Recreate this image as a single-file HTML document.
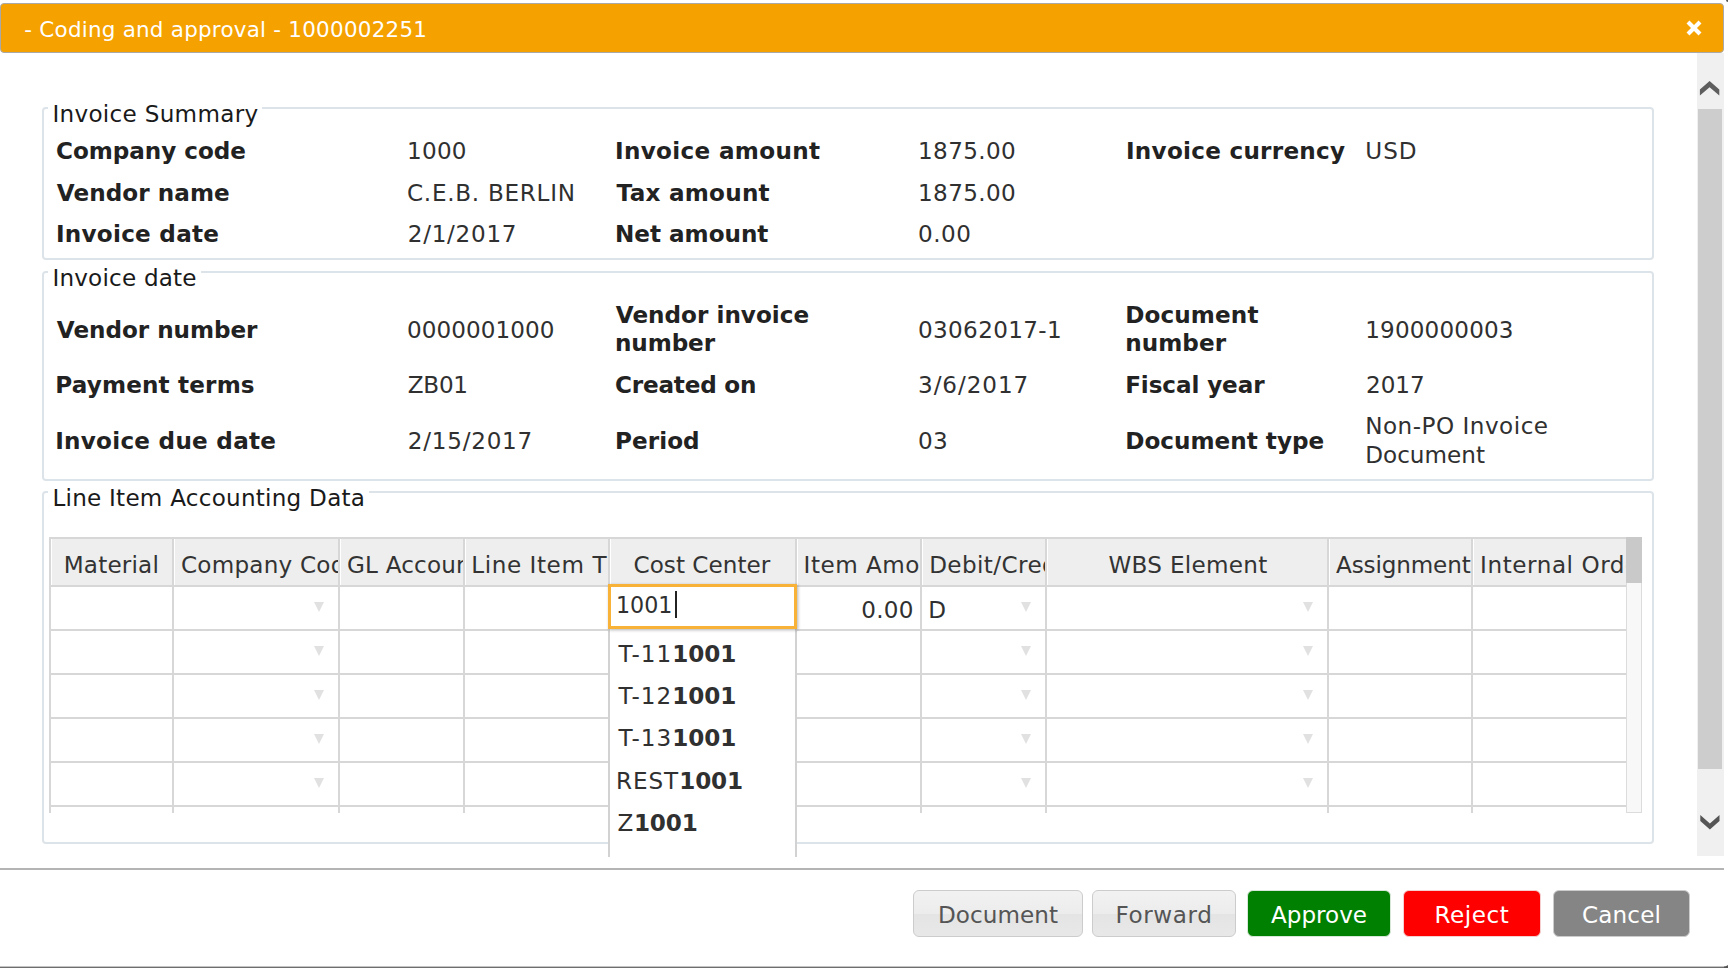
<!DOCTYPE html>
<html lang="en">
<head>
<meta charset="utf-8">
<title>Coding and approval - 1000002251</title>
<style>
html,body{margin:0;padding:0;}
body{width:1728px;height:968px;overflow:hidden;position:relative;background:#fff;
 font-family:"DejaVu Sans","Liberation Sans",sans-serif;font-size:23.1px;color:#303030;}
.a{position:absolute;}
.t{position:absolute;white-space:nowrap;line-height:28px;height:28px;}
.b{font-weight:bold;letter-spacing:-0.1px;color:#222;}
.n{letter-spacing:0.25px;}
#titlebar{left:0px;top:3px;width:1722px;height:48px;background:#f5a100;border:1px solid #a9a9a9;border-radius:4px;}
#titletext{left:24.3px;top:16px;color:#fff;font-size:21.45px;letter-spacing:0.24px;}
.fs{position:absolute;left:42px;width:1608px;border:2px solid #dce4e9;border-radius:4px;}
.lg{position:absolute;background:#fff;left:48.4px;padding:0 4px;white-space:nowrap;line-height:28px;height:22px;letter-spacing:0.3px;color:#1a1a1a;}
.hc{position:absolute;top:539px;height:46px;background:#eee;overflow:hidden;white-space:nowrap;line-height:28px;letter-spacing:0.25px;color:#333;}
.hc span{position:absolute;top:11.6px;}
.vl{position:absolute;width:2px;background:#d7d7d7;top:537px;height:276px;}
.hl{position:absolute;height:2px;background:#d7d7d7;left:50px;width:1576px;}
.arr{position:absolute;width:0;height:0;border-left:5.5px solid transparent;border-right:5.5px solid transparent;border-top:10px solid #e1e1e1;}
.btn{position:absolute;top:890px;height:45px;border-radius:6px;border:1px solid #ccc;text-align:center;line-height:28px;letter-spacing:0.25px;white-space:nowrap;}
.btn span{position:absolute;left:0;right:0;top:10.1px;}
.hc i{font-style:normal;letter-spacing:2.2px;}
.li{font-weight:bold;letter-spacing:-0.1px;}
</style>
</head>
<body>
<!-- dialog title bar -->
<div id="titlebar" class="a"></div>
<div id="titletext" class="t">- Coding and approval - 1000002251</div>
<svg class="a" style="left:1686px;top:20px" width="16" height="16" viewBox="0 0 16 16"><path d="M2 2 L14 14 M14 2 L2 14" stroke="#fff" stroke-width="4.2" fill="none"/></svg>

<!-- outer scrollbar -->
<div class="a" style="left:1697px;top:53px;width:27px;height:803px;background:#f0f0f0;"></div>
<div class="a" style="left:1698px;top:109px;width:24px;height:660px;background:#cdcdcd;"></div>
<svg class="a" style="left:1697px;top:76px" width="26" height="24" viewBox="1697 76 26 24"><path d="M1709.6 81 L1719.3 89.6 L1719.3 95.4 L1709.6 87.2 L1699.9 95.4 L1699.9 89.6 Z" fill="#5e5e5e"/></svg>
<svg class="a" style="left:1697px;top:810px" width="26" height="24" viewBox="1697 810 26 24"><path d="M1709.9 829.6 L1719.5 821 L1719.5 815 L1709.9 823.4 L1700.3 815 L1700.3 821 Z" fill="#555"/></svg>

<div class="fs" style="top:107px;height:149px;"></div>
<div class="lg" style="top:100px;letter-spacing:0.3px;">Invoice Summary</div>
<div class="fs" style="top:271px;height:206px;"></div>
<div class="lg" style="top:264px;letter-spacing:0.2px;">Invoice date</div>
<div class="fs" style="top:491px;height:349px;"></div>
<div class="lg" style="top:484px;letter-spacing:0.24px;">Line Item Accounting Data</div>
<div class="t b" style="left:56.0px;top:137px;letter-spacing:-0.03px;">Company code</div>
<div class="t n" style="left:407.0px;top:137px;letter-spacing:0.25px;">1000</div>
<div class="t b" style="left:615.0px;top:137px;letter-spacing:0.33px;">Invoice amount</div>
<div class="t n" style="left:918.0px;top:137px;letter-spacing:0.38px;">1875.00</div>
<div class="t b" style="left:1126.0px;top:137px;letter-spacing:0.27px;">Invoice currency</div>
<div class="t n" style="left:1365.2px;top:137px;letter-spacing:1.05px;">USD</div>
<div class="t b" style="left:56.8px;top:179px;letter-spacing:0.06px;">Vendor name</div>
<div class="t n" style="left:407.0px;top:179px;letter-spacing:0.72px;">C.E.B. BERLIN</div>
<div class="t b" style="left:616.6px;top:179px;letter-spacing:0.26px;">Tax amount</div>
<div class="t n" style="left:918.0px;top:179px;letter-spacing:0.38px;">1875.00</div>
<div class="t b" style="left:56.0px;top:220px;letter-spacing:0.26px;">Invoice date</div>
<div class="t n" style="left:407.8px;top:220px;letter-spacing:0.71px;">2/1/2017</div>
<div class="t b" style="left:615.0px;top:220px;letter-spacing:-0.01px;">Net amount</div>
<div class="t n" style="left:918.0px;top:220px;letter-spacing:0.52px;">0.00</div>
<div class="t b" style="left:56.8px;top:316px;letter-spacing:-0.03px;">Vendor number</div>
<div class="t n" style="left:407.0px;top:316px;letter-spacing:0.07px;">0000001000</div>
<div class="t b" style="left:615.8px;top:301px;letter-spacing:0.02px;">Vendor invoice</div>
<div class="t b" style="left:615.0px;top:329px;letter-spacing:-0.10px;">number</div>
<div class="t n" style="left:918.0px;top:316px;letter-spacing:0.34px;">03062017-1</div>
<div class="t b" style="left:1125.2px;top:301px;letter-spacing:0.13px;">Document</div>
<div class="t b" style="left:1125.2px;top:329px;letter-spacing:0.06px;">number</div>
<div class="t n" style="left:1365.2px;top:316px;letter-spacing:0.16px;">1900000003</div>
<div class="t b" style="left:55.2px;top:371px;letter-spacing:0.17px;">Payment terms</div>
<div class="t n" style="left:407.8px;top:371px;letter-spacing:-0.28px;">ZB01</div>
<div class="t b" style="left:615.0px;top:371px;letter-spacing:-0.19px;">Created on</div>
<div class="t n" style="left:918.0px;top:371px;letter-spacing:0.94px;">3/6/2017</div>
<div class="t b" style="left:1125.2px;top:371px;letter-spacing:-0.10px;">Fiscal year</div>
<div class="t n" style="left:1366.0px;top:371px;letter-spacing:-0.02px;">2017</div>
<div class="t b" style="left:55.2px;top:427px;letter-spacing:0.27px;">Invoice due date</div>
<div class="t n" style="left:407.8px;top:427px;letter-spacing:0.75px;">2/15/2017</div>
<div class="t b" style="left:615.0px;top:427px;letter-spacing:0.06px;">Period</div>
<div class="t n" style="left:918.0px;top:427px;letter-spacing:0.25px;">03</div>
<div class="t b" style="left:1125.2px;top:427px;letter-spacing:0.03px;">Document type</div>
<div class="t n" style="left:1365.2px;top:412px;letter-spacing:0.50px;">Non-PO Invoice</div>
<div class="t n" style="left:1365.2px;top:441px;letter-spacing:0.02px;">Document</div>
<!-- line item grid -->
<div class="hc" style="left:52px;width:121px;"><span style="left:11.75px;letter-spacing:0.18px;">Material</span></div>
<div class="hc" style="left:175px;width:164px;"><span style="left:6.00px;letter-spacing:0.22px;">Company Code</span></div>
<div class="hc" style="left:341px;width:123px;"><span style="left:6.00px;letter-spacing:0.18px;">GL Account</span></div>
<div class="hc" style="left:466px;width:143px;"><span style="left:5.30px;letter-spacing:0.57px;">Line Item <i>T</i>ext</span></div>
<div class="hc" style="left:611px;width:185px;"><span style="left:22.50px;letter-spacing:0.03px;">Cost Center</span></div>
<div class="hc" style="left:798px;width:123px;"><span style="left:5.60px;letter-spacing:0.5px;">Item Amount</span></div>
<div class="hc" style="left:923px;width:123px;"><span style="left:6.20px;letter-spacing:0.4px;">Debit/Credit</span></div>
<div class="hc" style="left:1048px;width:280px;"><span style="left:60.50px;letter-spacing:0.28px;">WBS Element</span></div>
<div class="hc" style="left:1330px;width:142px;"><span style="left:6.00px;letter-spacing:-0.14px;">Assignment</span></div>
<div class="hc" style="left:1474px;width:152px;"><span style="left:6.10px;letter-spacing:0.56px;">Internal Order</span></div>
<div class="hl" style="top:537px;"></div>
<div class="hl" style="top:585px;"></div>
<div class="hl" style="top:629px;"></div>
<div class="hl" style="top:673px;"></div>
<div class="hl" style="top:717px;"></div>
<div class="hl" style="top:761px;"></div>
<div class="hl" style="top:805px;"></div>
<div class="vl" style="left:49px;"></div>
<div class="vl" style="left:172px;"></div>
<div class="vl" style="left:338px;"></div>
<div class="vl" style="left:463px;"></div>
<div class="vl" style="left:608px;"></div>
<div class="vl" style="left:795px;"></div>
<div class="vl" style="left:920px;"></div>
<div class="vl" style="left:1045px;"></div>
<div class="vl" style="left:1327px;"></div>
<div class="vl" style="left:1471px;"></div>
<div class="arr" style="left:314px;top:602px;"></div>
<div class="arr" style="left:1021px;top:602px;"></div>
<div class="arr" style="left:1303px;top:602px;"></div>
<div class="arr" style="left:314px;top:646px;"></div>
<div class="arr" style="left:1021px;top:646px;"></div>
<div class="arr" style="left:1303px;top:646px;"></div>
<div class="arr" style="left:314px;top:690px;"></div>
<div class="arr" style="left:1021px;top:690px;"></div>
<div class="arr" style="left:1303px;top:690px;"></div>
<div class="arr" style="left:314px;top:734px;"></div>
<div class="arr" style="left:1021px;top:734px;"></div>
<div class="arr" style="left:1303px;top:734px;"></div>
<div class="arr" style="left:314px;top:778px;"></div>
<div class="arr" style="left:1021px;top:778px;"></div>
<div class="arr" style="left:1303px;top:778px;"></div>
<div class="t n" style="left:861.2px;top:596px;letter-spacing:0.25px;">0.00</div>
<div class="t n" style="left:928.2px;top:596px;letter-spacing:0.25px;">D</div>
<div class="a" style="left:1626px;top:537px;width:16px;height:276px;background:#f8f8f8;border:1px solid #dcdcdc;border-top:0;box-sizing:border-box;"></div>
<div class="a" style="left:1626px;top:537px;width:16px;height:46px;background:#c9c9c9;"></div>
<!-- cost center editor + autocomplete -->
<div class="a" style="left:608px;top:629px;width:185px;height:228px;background:#fff;border-left:2px solid #d2d2d2;border-right:2px solid #d2d2d2;"></div>
<div class="a" style="left:608px;top:584px;width:183px;height:39px;background:#fff;border:3px solid #f8b238;box-shadow:1px 1px 3px rgba(0,0,0,0.3);"></div>
<div class="t n" style="left:616.0px;top:591px;letter-spacing:-0.02px;font-size:22.2px;">1001</div>
<div class="a" style="left:675px;top:591px;width:2px;height:27px;background:#222;"></div>
<div class="t n" style="left:618.4px;top:640px;letter-spacing:1.05px;">T-11<b class="li">1001</b></div>
<div class="t n" style="left:618.4px;top:682px;letter-spacing:1.05px;">T-12<b class="li">1001</b></div>
<div class="t n" style="left:618.4px;top:724px;letter-spacing:1.05px;">T-13<b class="li">1001</b></div>
<div class="t n" style="left:616.0px;top:767px;letter-spacing:0.94px;">REST<b class="li">1001</b></div>
<div class="t n" style="left:617.6px;top:809px;letter-spacing:0.45px;">Z<b class="li">1001</b></div>
<!-- button pane -->
<div class="a" style="left:0;top:868px;width:1724px;height:2px;background:#b4b4b4;"></div>
<div class="a" style="left:0;top:966px;width:1726px;height:1px;background:#c4c4c4;"></div>
<div class="a" style="left:0;top:967px;width:1728px;height:1px;background:#6e6e6e;"></div>
<div class="a" style="left:1724px;top:961px;width:4px;height:7px;background:radial-gradient(circle at 0 0,rgba(80,80,80,0) 5px,#555 6px);"></div>
<div class="a" style="left:1726px;top:0;width:2px;height:2px;background:#555;border-radius:0 0 0 2px;"></div>
<div class="btn" style="left:913px;width:168px;background:linear-gradient(#f2f2f2 0%,#ececec 50%,#e4e4e4 51%,#e8e8e8 100%);color:#555;letter-spacing:0.05px;"><span>Document</span></div>
<div class="btn" style="left:1092px;width:142px;background:linear-gradient(#f2f2f2 0%,#ececec 50%,#e4e4e4 51%,#e8e8e8 100%);color:#555;letter-spacing:0.62px;"><span>Forward</span></div>
<div class="btn" style="left:1247px;width:142px;background:#008000;color:#fff;border-color:#d8e8d8;letter-spacing:0px;"><span>Approve</span></div>
<div class="btn" style="left:1403px;width:136px;background:#ff0000;color:#fff;border-color:#f4d0d0;letter-spacing:0.55px;"><span>Reject</span></div>
<div class="btn" style="left:1553px;width:135px;background:#858585;color:#fff;border-color:#ccc;letter-spacing:0.16px;"><span>Cancel</span></div>
</body>
</html>
